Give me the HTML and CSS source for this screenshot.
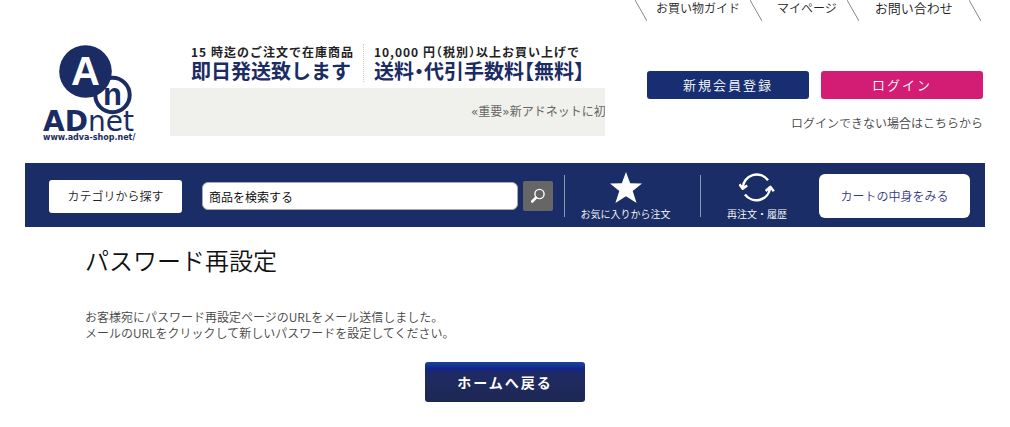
FILE: index.html
```html
<!DOCTYPE html>
<html lang="ja">
<head>
<meta charset="utf-8">
<title>パスワード再設定</title>
<link rel="stylesheet" href="styles.css">
</head>
<body>
<div class="page">
  <header class="header">
    <a class="logo" href="#">
      <svg class="logo-art" viewBox="0 0 96 100" role="img" aria-label="ADnet">
        <circle cx="43.500" cy="26.500" r="26.300" fill="#1b2b63"/>
        <circle cx="70.500" cy="50" r="17.200" fill="#fff" stroke="#1b2b63" stroke-width="4"/>
        <path d="M49 52.200A26.300 26.300 0 0 0 69 33L62 30L50 42Z" fill="#1b2b63"/>
        <text class="logo-n" x="70.500" y="60" text-anchor="middle">n</text>
        <text class="logo-a" x="43.500" y="40" text-anchor="middle">A</text>
        <text class="logo-name" x="1" y="86"><tspan class="logo-strong">AD</tspan>net</text>
        <text class="logo-url" x="1" y="95">www.adva-shop.net/</text>
      </svg>
    </a>
    <div class="center">
      <div class="promos">
        <p class="promo"><span class="promo-lead">15 時迄のご注文で在庫商品</span><strong class="promo-main">即日発送致します</strong></p>
        <p class="promo"><span class="promo-lead">10,000 円（税別）以上お買い上げで</span><strong class="promo-main">送料・代引手数料【無料】</strong></p>
      </div>
      <div class="ticker"><p class="ticker-text">«重要»新アドネットに初</p></div>
    </div>
    <div class="account">
      <nav class="guide">
        <svg class="slash" viewBox="0 0 12 21"><path d="M0 0L12 21"/></svg>
        <a class="guide-link guide-first" href="#">お買い物ガイド</a>
        <svg class="slash" viewBox="0 0 12 21"><path d="M0 0L12 21"/></svg>
        <a class="guide-link" href="#">マイページ</a>
        <svg class="slash" viewBox="0 0 12 21"><path d="M0 0L12 21"/></svg>
        <a class="guide-link guide-last" href="#">お問い合わせ</a>
        <svg class="slash" viewBox="0 0 12 21"><path d="M0 0L12 21"/></svg>
      </nav>
      <div class="account-buttons">
        <button class="account-button" type="button">新規会員登録</button>
        <button class="account-button login" type="button">ログイン</button>
      </div>
      <a class="help" href="#">ログインできない場合はこちらから</a>
    </div>
  </header>

  <nav class="bar">
    <button class="category" type="button">カテゴリから探す</button>
    <form class="search">
      <input class="search-box" type="text" aria-label="商品を検索する" value="商品を検索する">
      <button class="search-button" type="button" aria-label="検索">
        <svg class="search-icon" viewBox="0 0 16 16"><circle cx="9.500" cy="6" r="4.600" fill="none" stroke="#fff" stroke-width="1.400"/><path d="M6 9.700L2.200 13.500" stroke="#fff" stroke-width="2.600" stroke-linecap="round"/></svg>
      </button>
    </form>
    <a class="tile favorite" href="#">
      <svg class="tile-icon" viewBox="0 0 36 34"><path d="M18 1L22.200 12.300L34 12.500L24.700 20L28.600 32L18 25.200L7.400 32L11.300 20L2 12.500L13.800 12.300Z" fill="#fff"/></svg>
      <span>お気に入りから注文</span>
    </a>
    <a class="tile history" href="#">
      <svg class="tile-icon" viewBox="0 0 36 34" fill="none" stroke="#fff" stroke-width="2.500" stroke-linejoin="round"><path d="M29 9.200A14 14 0 0 0 3.700 17M0.500 13.200L3.700 17.800L8.200 14.600M6 23.500A14 14 0 0 0 31.200 16.500M26.700 20L31.300 15.800L34.800 20.300"/></svg>
      <span>再注文・履歴</span>
    </a>
    <button class="cart" type="button">カートの中身をみる</button>
  </nav>

  <main class="content">
    <h1 class="title">パスワード再設定</h1>
    <p class="message">お客様宛にパスワード再設定ページのURLをメール送信しました。<br>メールのURLをクリックして新しいパスワードを設定してください。</p>
    <button class="home" type="button">ホームへ戻る</button>
  </main>
</div>
</body>
</html>
```
FILE: styles.css
```css
* {
  box-sizing: border-box;
}

body {
  margin: 0;
  background: #fff;
  color: #444;
  font: 350 12px/16px "Noto Sans CJK JP", sans-serif;
}

button,
input {
  font: inherit;
  border: 0;
  padding: 0;
}

p,
h1 {
  margin: 0;
}

a {
  color: inherit;
  text-decoration: none;
}

svg {
  display: block;
}

.page {
  max-width: 960px;
  margin: 0 auto;
}

.header {
  display: grid;
  grid-template-columns: 145px 1fr 380px;
  padding-bottom: 18px;
}

.logo {
  padding: 45px 0 0 17px;
}

.logo-art {
  width: 96px;
}

.logo-art text {
  fill: #1b2b63;
  font-family: "DejaVu Sans", sans-serif;
}

.logo-art .logo-n {
  font: bold 31px "Liberation Sans", sans-serif;
}

.logo-art .logo-a {
  fill: #fff;
  font: bold 40px "Liberation Sans", sans-serif;
}

.logo-name {
  font-size: 28px;
  font-weight: 400;
}

.logo-strong {
  font-weight: bold;
}

.logo-art .logo-url {
  font-size: 8px;
  font-weight: bold;
}

.center {
  min-width: 0;
  padding-top: 44px;
}

.promos {
  display: flex;
  padding-left: 21px;
  white-space: nowrap;
}

.promo {
  display: flex;
  flex-direction: column;
  height: 38px;
}

.promo + .promo {
  margin-left: 9px;
  padding-left: 10px;
  border-left: 1px dotted #ccc;
}

.promo-lead {
  color: #222;
  font-weight: bold;
  font-size: 12px;
  line-height: 16px;
  letter-spacing: 1px;
  font-feature-settings: "halt";
}

.promo-main {
  color: #1b2b63;
  font-size: 20px;
  line-height: 22px;
  font-feature-settings: "halt";
}

.ticker {
  height: 48px;
  margin-top: 6px;
  padding: 16px 0 0 301px;
  overflow: hidden;
  background: #f0f1ec;
}

.ticker-text {
  font-family: "DejaVu Sans", "Noto Sans CJK JP", sans-serif;
  font-weight: 400;
  color: #666;
  white-space: nowrap;
}

.account {
  display: flex;
  flex-direction: column;
}

.guide {
  display: flex;
  padding-left: 30px;
  color: #222;
}

.slash {
  width: 12px;
  height: 21px;
  fill: none;
  stroke: #888;
}

.guide-link {
  padding: 0 10px 0 15px;
}

.guide-first {
  padding-left: 9px;
}

.guide-last {
  padding: 0 16px;
  font-size: 13px;
}

.account-buttons {
  display: grid;
  grid-template-columns: 1fr 1fr;
  gap: 12px;
  padding: 50px 2px 0 42px;
}

.account-button {
  height: 28px;
  border-radius: 3px;
  background: #182e73;
  color: #fff;
  font-size: 13px;
  letter-spacing: 2px;
}

.login {
  background: #d31c73;
}

.help {
  align-self: flex-end;
  margin: 16px 2px 0 0;
}

.bar {
  display: flex;
  align-items: center;
  height: 64px;
  padding: 2px 15px 0 24px;
  background: #1b2d66;
  color: #fff;
}

.category {
  width: 133px;
  height: 33px;
  border-radius: 3px;
  background: #fff;
  color: #222;
}

.search {
  display: flex;
  flex: 1;
  align-items: center;
  gap: 5px;
  margin: 0 11px 0 20px;
}

.search-box {
  flex: 1;
  min-width: 0;
  height: 28px;
  padding: 0 6px;
  border: 1px solid #aaa;
  border-radius: 6px;
  background: #fff;
  color: #000;
}

.search-button {
  display: grid;
  place-items: center;
  width: 30px;
  height: 30px;
  border-radius: 2px;
  background: #666;
}

.search-icon {
  width: 16px;
}

.tile {
  display: flex;
  flex-direction: column;
  align-items: center;
  height: 42px;
  border-left: 1px solid #8d96b3;
  font-size: 10px;
  line-height: 12px;
  white-space: nowrap;
}

.tile-icon {
  width: 36px;
  height: 34px;
  flex: none;
  margin: -4px 0 3px;
}

.favorite {
  width: 136px;
  padding-right: 14px;
}

.history {
  width: 119px;
  padding-right: 6px;
}

.cart {
  width: 151px;
  height: 44px;
  border-radius: 6px;
  background: #fff;
  color: #35377f;
}

.content {
  padding: 15px 60px 25px;
}

.title {
  color: #111;
  font-weight: 350;
  font-size: 24px;
  line-height: 36px;
}

.message {
  margin-top: 31px;
}

.home {
  display: block;
  width: 160px;
  height: 40px;
  margin: 21px auto 0;
  border-radius: 3px;
  background: linear-gradient(#18459a, #11248a 7px, #1f2a63 11px, #1d2855);
  color: #fff;
  font-weight: bold;
  font-size: 14px;
  letter-spacing: 2px;
}
```
